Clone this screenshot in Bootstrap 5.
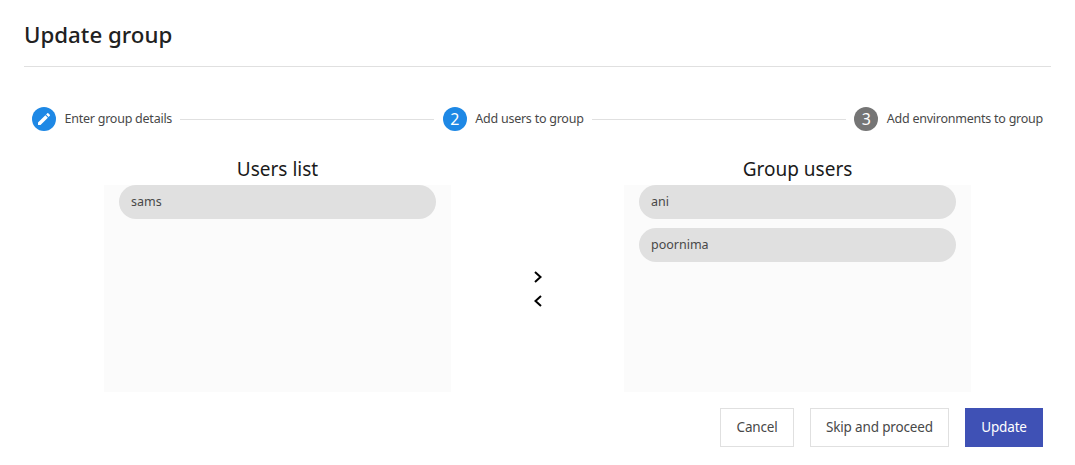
<!DOCTYPE html>
<html lang="en">
<head>
<meta charset="utf-8">
<title>Update group</title>
<link href="https://cdn.jsdelivr.net/npm/bootstrap@5.3.0/dist/css/bootstrap.min.css" rel="stylesheet">
<style>
html, body { background: #fff; }
body { font-family: "Noto Sans", "Open Sans", sans-serif; color: #212121; height: 465px; overflow: hidden; }
.page-wrap { padding: 0 24px; }
.page-head { height: 67px; border-bottom: 1px solid #e0e0e0; display: flex; align-items: center; padding-top: 5px; }
.page-title { font-size: 22.3px; font-weight: 500; line-height: 1; margin: 0; color: #212121; }
.stepper { padding: 40px 8px 0; height: 53px; box-sizing: content-box; }
.step-dot { width: 24px; height: 24px; border-radius: 50%; color: #fff; font-size: 16px; background: #1e88e5; flex: none; }
.step-dot.is-off { background: #757575; }
.step-text { font-size: 12.5px; line-height: 24px; margin-left: 8.5px; color: #484848; white-space: nowrap; letter-spacing: -.24px; }
.step-line { flex: 1 1 auto; height: 1px; background: #e0e0e0; margin: 0 8.5px 0 8px; }
.lists { margin-top: -1px; }
.list-col { width: 347px; }
.list-title { font-size: 19px; line-height: 20px; height: 26px; text-align: center; margin: 0; font-weight: 400; color: #1a1a1a; }
.list-box { height: 207px; background: #fbfbfb; padding: 0 15px; }
.user-chip { height: 34px; width: 317px; margin-bottom: 9px; border-radius: 17px; background: #e0e0e0; padding: 0 12px; font-size: 12.5px; line-height: 33px; color: #484848; }
.mid-col { width: 173px; padding-top: 27px; gap: 12px; }
.mid-col svg { display: block; }
.foot { padding: 16px 8px 0 0; gap: 16px; }
.btn-plain, .btn-main { font-size: 13.5px; height: 39px; border-radius: 0; padding: 0 15.2px; line-height: 37px; letter-spacing: -.16px; }
.btn-plain { border: 1px solid #e0e0e0; background: #fff; color: #484848; }
.btn-main { border: 1px solid #3f51b5; background: #3f51b5; color: #fff; }
</style>
</head>
<body>
<div class="page-wrap">
  <div class="page-head"><h1 class="page-title">Update group</h1></div>
  <div class="stepper d-flex align-items-start">
    <div class="d-flex align-items-center w-100">
      <span class="step-dot d-flex align-items-center justify-content-center">
        <svg width="16" height="16" viewBox="0 0 24 24" fill="#fff" aria-hidden="true"><path d="M3 17.25V21h3.75L17.81 9.94l-3.75-3.75L3 17.25zM20.71 7.04a1 1 0 0 0 0-1.41l-2.34-2.34a1 1 0 0 0-1.41 0l-1.83 1.83 3.75 3.75 1.83-1.83z"/></svg>
      </span>
      <span class="step-text">Enter group details</span>
      <span class="step-line"></span>
      <span class="step-dot d-flex align-items-center justify-content-center">2</span>
      <span class="step-text">Add users to group</span>
      <span class="step-line"></span>
      <span class="step-dot is-off d-flex align-items-center justify-content-center">3</span>
      <span class="step-text">Add environments to group</span>
    </div>
  </div>
  <div class="lists d-flex justify-content-center">
    <div class="list-col">
      <h2 class="list-title">Users list</h2>
      <div class="list-box">
        <div class="user-chip">sams</div>
      </div>
    </div>
    <div class="mid-col d-flex flex-column align-items-center justify-content-center">
      <svg width="24" height="12" viewBox="0 0 24 12" aria-hidden="true"><path d="M9 1l5.500 5L9 11" fill="none" stroke="#000" stroke-width="2"/></svg>
      <svg width="24" height="12" viewBox="0 0 24 12" aria-hidden="true"><path d="M15 1L9.500 6l5.500 5" fill="none" stroke="#000" stroke-width="2"/></svg>
    </div>
    <div class="list-col">
      <h2 class="list-title">Group users</h2>
      <div class="list-box">
        <div class="user-chip">ani</div>
        <div class="user-chip">poornima</div>
      </div>
    </div>
  </div>
  <div class="foot d-flex justify-content-end">
    <button type="button" class="btn btn-plain">Cancel</button>
    <button type="button" class="btn btn-plain">Skip and proceed</button>
    <button type="button" class="btn btn-main">Update</button>
  </div>
</div>
<script src="https://cdn.jsdelivr.net/npm/bootstrap@5.3.0/dist/js/bootstrap.bundle.min.js"></script>
</body>
</html>
